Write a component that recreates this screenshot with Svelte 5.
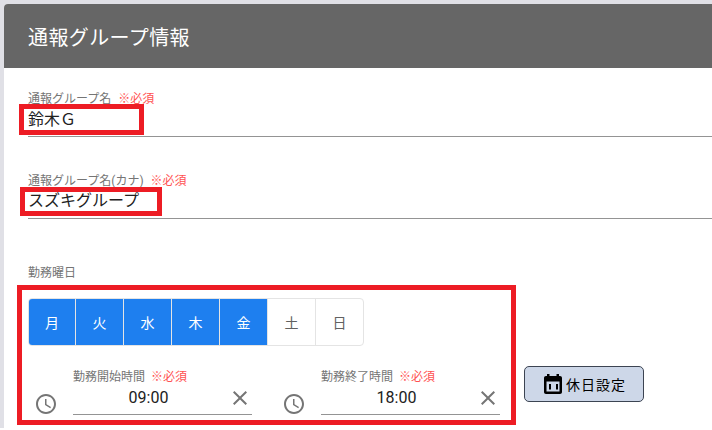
<script lang="ts">
  const days = [
    { label: '月', on: true },
    { label: '火', on: true },
    { label: '水', on: true },
    { label: '木', on: true },
    { label: '金', on: true },
    { label: '土', on: false },
    { label: '日', on: false },
  ]
  const times = [
    { label: '勤務開始時間', value: '09:00' },
    { label: '勤務終了時間', value: '18:00' },
  ]
</script>

<div class="page">
  <div class="card">
    <div class="head">通報グループ情報</div>
    <div class="body">
      <div class="field first">
        <div class="label">通報グループ名<span class="req">※必須</span></div>
        <div class="value">鈴木Ｇ</div>
        <span class="mark mark1"></span>
      </div>
      <div class="field second">
        <div class="label">通報グループ名(カナ)<span class="req">※必須</span></div>
        <div class="value">スズキグループ</div>
        <span class="mark mark2"></span>
      </div>

      <div class="label week">勤務曜日</div>
      <div class="schedule">
        <span class="mark mark3"></span>
        <div class="days">
          {#each days as d}
            <div class="day" class:on={d.on}>{d.label}</div>
          {/each}
        </div>
        <div class="bottom">
          <div class="times">
            {#each times as t}
              <div class="time">
                <svg class="clock" viewBox="0 0 24 24" width="24" height="24">
                  <path fill="#757575" d="M11.99 2C6.47 2 2 6.48 2 12s4.47 10 9.99 10C17.52 22 22 17.52 22 12S17.52 2 11.99 2zM12 20c-4.42 0-8-3.58-8-8s3.58-8 8-8 8 3.58 8 8-3.58 8-8 8z"/>
                  <path fill="#757575" d="M12.5 7H11v6l5.25 3.15.75-1.23-4.5-2.67z"/>
                </svg>
                <div class="time-field">
                  <div class="label">{t.label}<span class="req">※必須</span></div>
                  <div class="time-input">
                    <span class="time-value">{t.value}</span>
                    <svg class="clear" viewBox="0 0 24 24" width="24" height="24">
                      <path fill="#757575" d="M19 6.41 17.59 5 12 10.59 6.41 5 5 6.41 10.59 12 5 17.59 6.41 19 12 13.41 17.59 19 19 17.59 13.41 12z"/>
                    </svg>
                  </div>
                </div>
              </div>
            {/each}
          </div>
          <button class="holiday">
            <svg viewBox="0 0 24 24" width="24" height="24">
              <path fill-rule="evenodd" d="M6 2h2.5v2h7V2H18v2h1c1.2 0 2 .9 2 2v14c0 1.100-.8 2-2 2H5c-1.200 0-2-.9-2-2V6c0-1.100.8-2 2-2h1zM5.500 9.500v10h13v-10z"/>
              <path d="M8 12h2v5.500H8zm7 0h2v5.500h-2z"/>
            </svg>
            <span>休日設定</span>
          </button>
        </div>
      </div>
    </div>
  </div>
</div>

<style>
  :global(body) {
    margin: 0;
    background: #fff;
  }

  .page {
    width: 712px;
    height: 430px;
    box-sizing: border-box;
    padding: 4px 0 2px 4px;
    background: linear-gradient(#e0e0e6, #e0e0e6) no-repeat 0 0 / 100% 428px;
    overflow: hidden;
    font-family: Roboto, "Noto Sans CJK JP", sans-serif;
  }

  .card {
    height: 100%;
    background: #fff;
    border-radius: 4px 0 0 0;
    overflow: hidden;
  }

  .head {
    height: 64px;
    box-sizing: border-box;
    padding: 0 24px;
    display: flex;
    align-items: center;
    background: #666;
    color: #fff;
    font-size: 20px;
    letter-spacing: 0.4px;
  }

  .body {
    padding: 0 0 0 24px;
  }

  .label {
    font-size: 12px;
    line-height: 14px;
    color: #757575;
  }

  .req {
    margin-left: 6px;
    color: #ff5252;
  }

  .field .req {
    margin-left: 7px;
  }

  .field {
    position: relative;
    height: 44px;
    border-bottom: 1px solid #949494;
  }

  .first {
    margin-top: 24px;
  }

  .second {
    margin-top: 37px;
  }

  .value {
    font-size: 16px;
    line-height: 24px;
    color: #212121;
    margin-top: 2px;
  }

  .second .value {
    margin-top: 1px;
  }

  .week {
    margin-top: 47px;
  }

  .schedule {
    position: relative;
    margin-top: 18px;
  }

  .days {
    display: flex;
    width: 336px;
    height: 48px;
    box-sizing: border-box;
    border: 1px solid #e4e4e4;
    border-radius: 4px;
    overflow: hidden;
  }

  .day {
    flex: 0 0 48px;
    box-sizing: border-box;
    display: flex;
    align-items: center;
    justify-content: center;
    border-left: 1px solid #e4e4e4;
    font-size: 14px;
    color: #616161;
  }

  .day:first-child {
    border-left: 0;
    flex-basis: 46px;
  }

  .day.on {
    background: #1e7fef;
    color: #fff;
  }

  .bottom {
    display: flex;
    align-items: flex-start;
    margin-top: 20px;
  }

  .times {
    display: flex;
    gap: 20px;
  }

  .time {
    display: flex;
    align-items: flex-start;
    width: 228px;
    padding-top: 4px;
  }

  .clock {
    flex: none;
    margin: 22px 15px 0 6px;
  }

  .time-field {
    width: 179px;
  }

  .time-input {
    display: flex;
    align-items: center;
    height: 26px;
    padding-bottom: 4px;
    border-bottom: 1px solid #949494;
    position: relative;
  }

  .time-value {
    flex: 1;
    text-align: center;
    font-size: 16px;
    color: #212121;
    padding-right: 28px;
  }

  .clear {
    position: absolute;
    right: 0;
    top: 2px;
  }

  .holiday {
    display: flex;
    align-items: center;
    width: 120px;
    height: 36px;
    margin-left: 20px;
    padding: 0 0 0 16px;
    box-sizing: border-box;
    background: #cdd7e8;
    border: 1px solid #3c4452;
    border-radius: 5px;
    font: inherit;
    font-size: 14px;
    letter-spacing: 1px;
    color: #000;
  }

  .holiday span {
    margin-left: 1px;
  }

  .mark {
    position: absolute;
    box-sizing: border-box;
    border: 5px solid #ed1c24;
    pointer-events: none;
  }

  .mark1 {
    left: -9px;
    top: 12px;
    width: 125px;
    height: 31px;
  }

  .mark2 {
    left: -8px;
    top: 13px;
    width: 142px;
    height: 29px;
  }

  .mark3 {
    left: -11px;
    top: -13px;
    width: 499px;
    height: 140px;
  }
</style>
